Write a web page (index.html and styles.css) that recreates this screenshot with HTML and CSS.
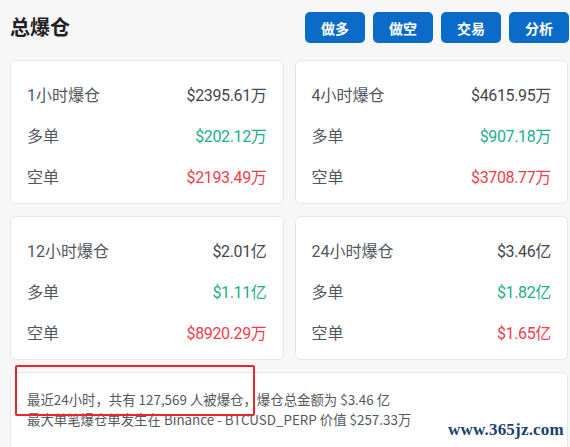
FILE: index.html
```html
<!DOCTYPE html>
<html lang="zh">
<head>
<meta charset="utf-8">
<title>总爆仓</title>
<link rel="stylesheet" href="styles.css">
</head>
<body>
<div class="page">
  <header class="head">
    <h1 class="title">总爆仓</h1>
    <div class="actions">
      <button class="btn">做多</button>
      <button class="btn">做空</button>
      <button class="btn">交易</button>
      <button class="btn">分析</button>
    </div>
  </header>

  <div class="grid">
    <section class="card">
      <div class="row"><span class="label">1小时爆仓</span><span class="val">$2395.61万</span></div>
      <div class="row"><span class="label">多单</span><span class="val up">$202.12万</span></div>
      <div class="row"><span class="label">空单</span><span class="val down">$2193.49万</span></div>
    </section>
    <section class="card">
      <div class="row"><span class="label">4小时爆仓</span><span class="val">$4615.95万</span></div>
      <div class="row"><span class="label">多单</span><span class="val up">$907.18万</span></div>
      <div class="row"><span class="label">空单</span><span class="val down">$3708.77万</span></div>
    </section>
    <section class="card">
      <div class="row"><span class="label">12小时爆仓</span><span class="val">$2.01亿</span></div>
      <div class="row"><span class="label">多单</span><span class="val up">$1.11亿</span></div>
      <div class="row"><span class="label">空单</span><span class="val down">$8920.29万</span></div>
    </section>
    <section class="card">
      <div class="row"><span class="label">24小时爆仓</span><span class="val">$3.46亿</span></div>
      <div class="row"><span class="label">多单</span><span class="val up">$1.82亿</span></div>
      <div class="row"><span class="label">空单</span><span class="val down">$1.65亿</span></div>
    </section>
  </div>

  <section class="summary">
    <p class="line">最近24小时，共有 127,569 人被爆仓，爆仓总金额为 $3.46 亿</p>
    <p class="line">最大单笔爆仓单发生在 Binance - BTCUSD_PERP 价值 $257.33万</p>
    <div class="mark"></div>
  </section>
  <div class="watermark">www.365jz.com</div>
</div>
</body>
</html>
```

FILE: styles.css
```css
html, body {
  margin: 0;
  padding: 0;
  background: #f7f7f7;
  overflow: hidden;
}
body {
  font-family: Roboto, "Noto Sans CJK SC", sans-serif;
  color: #3d4046;
}
.page {
  position: relative;
  width: 558px;
  height: 447px;
  padding: 11px 0 0 10px;
  box-sizing: content-box;
}
.head {
  display: flex;
  justify-content: space-between;
  align-items: center;
  height: 32px;
  margin-bottom: 17px;
}
.title {
  margin: 0;
  font-size: 20px;
  line-height: 28px;
  font-weight: 700;
  color: #1f2126;
  font-family: "Noto Sans CJK SC", sans-serif;
}
.actions {
  display: flex;
  gap: 8px;
  margin-right: -1px;
  padding-top: 1px;
}
.btn {
  width: 60px;
  height: 31px;
  border: 0;
  border-radius: 5px;
  background: #0b6bc9;
  color: #fff;
  font-family: "Noto Sans CJK SC", sans-serif;
  font-size: 14px;
  font-weight: 700;
  padding: 0;
}
.grid {
  display: grid;
  grid-template-columns: 1fr 1fr;
  column-gap: 11px;
  row-gap: 12px;
}
.card {
  background: #fff;
  border: 1px solid #e6e6e6;
  border-radius: 6px;
  padding: 12px 16px 7px 16px;
}
.row {
  height: 41px;
  display: flex;
  justify-content: space-between;
  align-items: center;
  font-size: 16px;
}
.label {
  color: #52565d;
}
.val {
  color: #44474d;
  letter-spacing: -0.35px;
}
.val.up {
  color: #22ad8c;
}
.val.down {
  color: #f23c4c;
}
.summary {
  position: relative;
  margin-top: 12px;
  background: #fff;
  border: 1px solid #e6e6e6;
  border-radius: 6px;
  padding: 16px 16px 40px 16px;
}
.line {
  margin: 0;
  font-size: 13.4px;
  line-height: 20px;
  color: #55595f;
  font-family: "Noto Sans CJK SC", sans-serif;
}
.mark {
  position: absolute;
  left: 4px;
  top: -8px;
  width: 236px;
  height: 47px;
  border: 2px solid #e8262b;
  border-radius: 2px;
}
.watermark {
  position: absolute;
  left: 448px;
  top: 420px;
  font-family: "Liberation Serif", serif;
  font-weight: 700;
  font-size: 17px;
  line-height: 20px;
  color: #1b3f73;
  letter-spacing: 0.2px;
}
```
